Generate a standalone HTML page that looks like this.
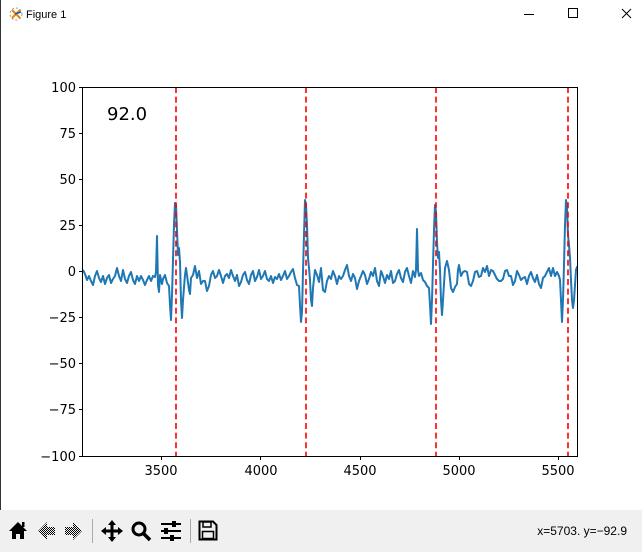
<!DOCTYPE html>
<html><head><meta charset="utf-8"><style>
html,body{margin:0;padding:0;width:642px;height:552px;overflow:hidden;background:#fff;font-family:"DejaVu Sans","Liberation Sans",sans-serif;}
.tb{position:absolute;left:0;top:510px;width:642px;height:42px;background:#f0f0f0;}
</style></head><body>
<div style="position:absolute;left:0;top:0;width:1px;height:552px;background:#333"></div>
<svg width="642" height="552" style="position:absolute;left:0;top:0">
 <g transform="translate(9,6)">
  <circle cx="7" cy="8" r="6" fill="none" stroke="#999" stroke-width="1" stroke-dasharray="2 2"/>
  <path d="M3 4 L11 12 M11 4 L3 12" stroke="#f08000" stroke-width="2"/>
  <path d="M6 8 L12 6" stroke="#1060c0" stroke-width="1.5"/>
 </g>
 <text x="26" y="18" font-family="Liberation Sans, sans-serif" font-size="11" fill="#000">Figure 1</text>
 <path d="M524 14.5 H534" stroke="#000" stroke-width="1"/>
 <rect x="568.5" y="8.5" width="9" height="9" fill="none" stroke="#000"/>
 <path d="M622 9 L631 18 M631 9 L622 18" stroke="#000" stroke-width="1"/>

 <rect x="82.5" y="87.5" width="495" height="369" fill="#fff" stroke="#000" stroke-width="1"/>
 <g stroke="#000" stroke-width="1">
  <path d="M79 87.5H82.5 M79 133.5H82.5 M79 179.5H82.5 M79 225.5H82.5 M79 271.5H82.5 M79 317.5H82.5 M79 363.5H82.5 M79 409.5H82.5 M79 456.5H82.5"/>
  <path d="M161.5 456.5V460 M260.5 456.5V460 M360.5 456.5V460 M459.5 456.5V460 M558.5 456.5V460"/>
 </g>
 <g font-size="13" fill="#000" text-anchor="end">
  <text x="76" y="92">100</text><text x="76" y="138">75</text><text x="76" y="184">50</text>
  <text x="76" y="230">25</text><text x="76" y="276">0</text><text x="76" y="322">−25</text>
  <text x="76" y="368">−50</text><text x="76" y="414">−75</text><text x="76" y="461">−100</text>
 </g>
 <g font-size="13" fill="#000" text-anchor="middle">
  <text x="161" y="475">3500</text><text x="261" y="475">4000</text><text x="360" y="475">4500</text>
  <text x="459" y="475">5000</text><text x="558" y="475">5500</text>
 </g>
 <text x="107" y="120" font-size="18" fill="#000">92.0</text>
 <clipPath id="c"><rect x="83" y="88" width="494" height="368"/></clipPath>
 <g clip-path="url(#c)">
 <polyline fill="none" stroke="#1f77b4" stroke-width="2" stroke-linejoin="round" points="
 83,270 85,274 87,280 89,276 91,281 93,285 95,276 97,271 99,278 101,282 103,276 105,284 107,278 109,275 111,283 113,279 115,276 117,268 119,276 121,281 123,270 125,279 127,283 129,276 131,272 133,280 135,284 137,276 139,281 141,276 143,280 145,285 147,280 149,276 151,281 153,276 155,277 156,272 157,236 158,285 159,292 160,275 162,284 163,279 165,275 167,283 169,286 170,305 171,320 172,295 173,260 174,225 175,203 176,205 177,230 178,255 179,248 180,262 181,300 182,318 183,300 185,275 186,268 187,275 189,290 190,294 191,278 193,275 195,266 197,278 199,271 201,284 203,281 205,281 207,291 209,286 211,275 213,271 215,278 217,276 219,270 221,276 223,283 225,276 227,274 229,278 231,270 233,276 235,281 237,275 239,286 241,282 243,275 245,272 247,280 249,284 251,275 253,271 255,281 257,277 259,270 261,279 263,276 265,271 267,279 269,281 271,276 273,283 275,277 277,279 279,274 281,280 283,276 285,271 287,279 289,276 291,272 293,269 295,278 297,285 299,286 300,305 301,322 302,312 303,272 304,235 305,200 306,205 307,225 308,258 309,268 310,280 311,300 312,306 313,288 315,270 317,275 319,282 321,268 323,290 325,292 327,281 329,276 331,279 333,271 335,276 337,284 339,276 341,279 343,276 345,270 347,265 349,276 351,281 353,274 355,278 357,289 359,281 361,276 363,271 365,275 367,284 369,279 371,272 373,276 375,268 377,281 379,286 381,271 383,276 385,283 387,275 389,279 391,271 393,283 395,281 397,274 399,270 401,278 403,282 405,272 407,268 409,276 411,283 413,271 415,277 416,270 417,229 418,270 419,276 421,273 423,280 425,282 427,286 429,288 430,305 431,324 432,300 433,265 434,230 435,205 436,212 437,242 438,258 439,252 440,270 441,300 442,315 443,300 445,268 447,261 449,270 451,288 453,292 455,287 457,284 458,270 459,265 461,276 463,272 465,271 467,272 469,284 471,286 473,281 475,272 477,271 479,277 481,276 483,268 485,272 487,266 489,276 491,270 493,271 495,275 497,279 499,281 501,281 503,279 505,271 507,270 509,276 511,276 513,285 515,281 517,271 519,275 521,280 523,278 525,277 527,284 529,276 531,272 533,278 535,282 537,275 539,284 541,288 543,278 545,276 547,272 549,268 551,276 553,268 555,276 557,272 559,276 560,280 561,300 562,322 563,300 564,265 565,225 566,200 567,208 568,235 569,245 570,258 571,280 572,300 573,308 574,300 575,285 576,270 577,267 578,268"/>
 <g stroke="#f00" stroke-width="1.6" stroke-dasharray="6 3.6">
  <path d="M176 87V456 M306 87V456 M436 87V456 M568 87V456"/>
 </g>
 </g>
</svg>
<div class="tb">
 <svg width="642" height="42" style="position:absolute;left:0;top:0">
  <path d="M9 21 L18 12 L27 21 L24 21 L24 29 L20 29 L20 24 L16 24 L16 29 L12 29 L12 21 Z" fill="#000"/>
  <rect x="22" y="12" width="2.5" height="5" fill="#000"/>
  <defs><pattern id="d" width="2" height="2" patternUnits="userSpaceOnUse"><rect width="1" height="1" fill="#000"/><rect x="1" y="1" width="1" height="1" fill="#000"/></pattern></defs>
  <path d="M38 21 L47 12 L47 17 L55 17 L55 25 L47 25 L47 30 Z" fill="url(#d)"/>
  <path d="M82 21 L73 12 L73 17 L65 17 L65 25 L73 25 L73 30 Z" fill="url(#d)"/>
  <rect x="92" y="9" width="1" height="24" fill="#aaa"/>
  <path d="M112 10 L116 15 L113.5 15 L113.5 19.5 L118 19.5 L118 17 L123 21 L118 25 L118 22.5 L113.5 22.5 L113.5 27 L116 27 L112 32 L108 27 L110.5 27 L110.5 22.5 L106 22.5 L106 25 L101 21 L106 17 L106 19.5 L110.5 19.5 L110.5 15 L108 15 Z" fill="#000"/>
  <circle cx="139" cy="19" r="6" fill="none" stroke="#000" stroke-width="3"/>
  <path d="M143 23 L150 30" stroke="#000" stroke-width="3.5"/>
  <g fill="#000"><rect x="161" y="13" width="20" height="2"/><rect x="161" y="20" width="20" height="2"/><rect x="161" y="27" width="20" height="2"/>
  <rect x="172" y="11" width="4" height="6"/><rect x="164" y="18" width="4" height="6"/><rect x="170" y="25" width="4" height="6"/></g>
  <rect x="190" y="9" width="1" height="24" fill="#aaa"/>
  <path d="M199.5 11.5 H213 L216.5 15 V29.5 H199.5 Z" fill="none" stroke="#000" stroke-width="2"/>
  <rect x="203" y="12" width="8" height="5" fill="none" stroke="#000" stroke-width="1.5"/>
  <rect x="202.5" y="21.5" width="11" height="7" fill="none" stroke="#000" stroke-width="1.5"/>
  <text x="627" y="25" font-family="Liberation Sans, sans-serif" font-size="12" text-anchor="end" fill="#000">x=5703. y=−92.9</text>
 </svg>
</div>
</body></html>
